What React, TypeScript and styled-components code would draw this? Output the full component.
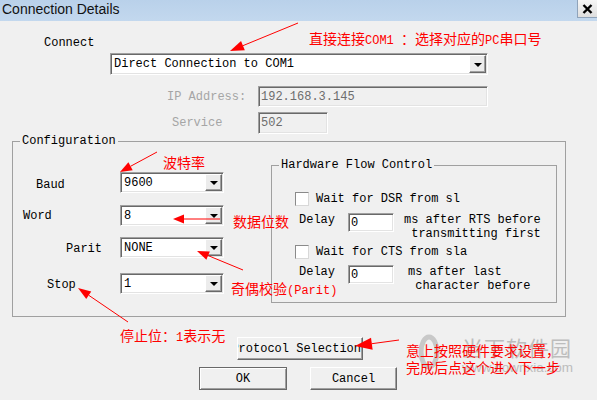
import React from "react";
import styled, { createGlobalStyle } from "styled-components";

const MONO = `"Liberation Mono", "DejaVu Sans Mono", monospace`;
const CJK = `"Noto Sans CJK SC", "Noto Sans", sans-serif`;

const GlobalStyle = createGlobalStyle`
  html, body { margin: 0; padding: 0; background: #f0f0f0; }
  #root { width: 597px; height: 400px; }
`;

const Window = styled.div`
  position: relative;
  width: 597px;
  height: 400px;
  overflow: hidden;
  background: #f0f0f0;
  font-family: ${MONO};
  font-size: 12px;
  color: #000;
`;

const TitleBar = styled.div`
  display: flex;
  align-items: flex-start;
  height: 21px;
  background: linear-gradient(#b9d1ea, #c3d8ee);
`;
const Title = styled.div`
  flex: 1;
  padding-left: 2px;
  font-family: "Liberation Sans", Arial, sans-serif;
  font-size: 14px;
  line-height: 19px;
  color: #111;
`;
const CloseButton = styled.div`
  width: 20px;
  height: 18px;
  box-sizing: border-box;
  display: flex;
  align-items: center;
  justify-content: center;
  background: linear-gradient(#f6f6f6, #dedede);
  border-left: 1px solid #8fa3ba;
  border-bottom: 1px solid #8fa3ba;
`;

const Body = styled.div`
  display: flex;
  flex-direction: column;
  align-items: flex-start;
`;
const ConnectLabel = styled.div`
  margin: 15px 0 3px 44px;
  line-height: 14px;
`;

// sunken white box with a drop button (combo)
const Combo = styled.div<{ $w: number; $h: number; $ml?: number }>`
  display: flex;
  width: ${p => p.$w}px;
  height: ${p => p.$h}px;
  margin-left: ${p => p.$ml || 0}px;
  box-sizing: border-box;
  background: #fff;
  border: 1px solid;
  border-color: #a0a0a0 #fff #fff #a0a0a0;
  box-shadow: inset 1px 1px 0 #696969, inset -1px -1px 0 #e3e3e3;
`;
const ComboText = styled.div`
  flex: 1;
  display: flex;
  align-items: center;
  padding-left: 3px;
  white-space: nowrap;
`;
const DropButton = styled.div`
  width: 17px;
  margin: 1px 1px 1px 0;
  box-sizing: border-box;
  display: flex;
  align-items: center;
  justify-content: center;
  background: #ececec;
  border: 1px solid;
  border-color: #fff #696969 #696969 #fff;
  box-shadow: inset -1px -1px 0 #a0a0a0;
  &::after {
    content: "";
    border-left: 4px solid transparent;
    border-right: 4px solid transparent;
    border-top: 4px solid #000;
    margin-top: 1px;
  }
`;

const FieldRow = styled.div<{ $mt: number }>`
  display: grid;
  grid-template-columns: 258px auto;
  align-items: center;
  margin-top: ${p => p.$mt}px;
`;
const DisabledLabel = styled.div<{ $indent: number }>`
  padding-left: ${p => p.$indent}px;
  color: #a5a5a5;
  line-height: 14px;
`;
const Field = styled.div<{ $w: number; $h: number; $disabled?: boolean }>`
  width: ${p => p.$w}px;
  height: ${p => p.$h}px;
  box-sizing: border-box;
  display: flex;
  align-items: center;
  padding-left: 2px;
  background: ${p => (p.$disabled ? "#f0f0f0" : "#fff")};
  color: ${p => (p.$disabled ? "#6d6d6d" : "#000")};
  border: 1px solid;
  border-color: #a0a0a0 #fff #fff #a0a0a0;
  box-shadow: inset 1px 1px 0 #696969, inset -1px -1px 0 #e3e3e3;
`;

const Group = styled.fieldset<{ $w: number; $h: number; $ml?: number; $mt?: number }>`
  width: ${p => p.$w}px;
  height: ${p => p.$h}px;
  margin: ${p => p.$mt || 0}px 0 0 ${p => p.$ml || 0}px;
  padding: 0;
  box-sizing: border-box;
  border: 1px solid #a0a0a0;
  min-width: 0;
`;
const Legend = styled.legend`
  margin-left: 7px;
  padding: 0 2px;
  line-height: 14px;
`;
const ConfigBody = styled.div`
  display: flex;
  align-items: flex-start;
`;
const SettingsColumn = styled.div`
  width: 258px;
  padding-top: 24px;
  display: flex;
  flex-direction: column;
`;
const SettingRow = styled.div<{ $mt: number }>`
  display: grid;
  grid-template-columns: 107px 104px;
  align-items: center;
  margin-top: ${p => p.$mt}px;
`;
const SettingLabel = styled.div<{ $indent: number; $dy?: number }>`
  padding-left: ${p => p.$indent}px;
  padding-top: ${p => p.$dy || 0}px;
  line-height: 14px;
`;

const CheckRow = styled.div<{ $mt: number }>`
  display: flex;
  align-items: center;
  gap: 7px;
  margin: ${p => p.$mt}px 0 0 23px;
  line-height: 14px;
`;
const CheckBox = styled.span`
  width: 14px;
  height: 14px;
  box-sizing: border-box;
  background: #fff;
  border: 1px solid;
  border-color: #8a8a8a #d8d8d8 #d8d8d8 #8a8a8a;
`;
const DelayRow = styled.div<{ $mt: number; $gap: number }>`
  display: grid;
  grid-template-columns: 76px 46px auto;
  align-items: start;
  margin-top: ${p => p.$mt}px;
  line-height: 14px;
  > :last-child {
    padding-left: ${p => p.$gap}px;
  }
`;
const DelayLabel = styled.div`
  padding-left: 27px;
`;
const DelayNote = styled.div`
  white-space: pre;
`;

const Button = styled.div<{ $w: number; $default?: boolean }>`
  width: ${p => p.$w}px;
  height: 23px;
  box-sizing: border-box;
  display: flex;
  align-items: center;
  justify-content: center;
  overflow: hidden;
  white-space: nowrap;
  background: #f0f0f0;
  border: 1px solid;
  border-color: ${p => (p.$default ? "#696969" : "#fff #696969 #696969 #fff")};
  box-shadow: ${p =>
    p.$default
      ? "inset 1px 1px 0 #fff, inset -1px -1px 0 #a0a0a0"
      : "inset -1px -1px 0 #a0a0a0"};
`;
const ProtocolButton = styled(Button)`
  justify-content: flex-end;
  padding-right: 1px;
  margin: 20px 0 0 237px;
`;
const ButtonRow = styled.div`
  display: flex;
  gap: 23px;
  margin: 7px 0 0 199px;
`;

// annotations drawn over the dialog
const Overlay = styled.div`
  position: absolute;
  inset: 0;
  pointer-events: none;
`;
const Note = styled.div<{ $x: number; $y: number; $lh?: number }>`
  position: absolute;
  left: ${p => p.$x}px;
  top: ${p => p.$y}px;
  font-family: ${CJK};
  font-size: 14px;
  line-height: ${p => p.$lh || 14}px;
  color: #ff0000;
  white-space: nowrap;
`;
const Latin = styled.span`
  font-family: ${MONO};
  font-size: 12px;
`;
const Watermark = styled.div`
  position: absolute;
  left: 418px;
  top: 333px;
  display: flex;
  gap: 22px;
  color: #bdbdbd;
`;
const WatermarkText = styled.div`
  display: flex;
  flex-direction: column;
  font-family: ${CJK};
  font-size: 21px;
  line-height: 28px;
  letter-spacing: 1px;
  > small {
    font-family: "Liberation Sans", Arial, sans-serif;
    font-size: 13.5px;
    line-height: 14px;
    letter-spacing: 0;
  }
`;

function Arrow({ from, to, head = 12, wing = 4.5 }: { from: [number, number]; to: [number, number]; head?: number; wing?: number }) {
  const [x1, y1] = from;
  const [x2, y2] = to;
  const len = Math.hypot(x2 - x1, y2 - y1);
  const ux = (x2 - x1) / len;
  const uy = (y2 - y1) / len;
  const bx = x2 - ux * head;
  const by = y2 - uy * head;
  const px = -uy * wing;
  const py = ux * wing;
  return (
    <g>
      <line x1={x1} y1={y1} x2={bx} y2={by} stroke="#ff0000" strokeWidth={1} />
      <polygon points={`${x2},${y2} ${bx + px},${by + py} ${bx - px},${by - py}`} fill="#ff0000" />
    </g>
  );
}

export default function App() {
  return (
    <Window>
      <GlobalStyle />
      <TitleBar>
        <Title>Connection Details</Title>
        <CloseButton>
          <svg width="11" height="10" viewBox="0 0 11 10">
            <path d="M1.5 1 L9.5 9 M9.5 1 L1.5 9" stroke="#000" strokeWidth="2.4" />
          </svg>
        </CloseButton>
      </TitleBar>
      <Body>
        <ConnectLabel>Connect</ConnectLabel>
        <Combo $w={378} $h={22} $ml={110}>
          <ComboText>Direct Connection to COM1</ComboText>
          <DropButton />
        </Combo>
        <FieldRow $mt={11}>
          <DisabledLabel $indent={167}>IP Address:</DisabledLabel>
          <Field $w={230} $h={21} $disabled>192.168.3.145</Field>
        </FieldRow>
        <FieldRow $mt={5}>
          <DisabledLabel $indent={172}>Service</DisabledLabel>
          <Field $w={70} $h={22} $disabled>502</Field>
        </FieldRow>

        <Group $w={554} $h={183} $ml={12}>
          <Legend>Configuration</Legend>
          <ConfigBody>
            <SettingsColumn>
              <SettingRow $mt={0}>
                <SettingLabel $indent={23} $dy={5}>Baud</SettingLabel>
                <Combo $w={104} $h={21}><ComboText>9600</ComboText><DropButton /></Combo>
              </SettingRow>
              <SettingRow $mt={12}>
                <SettingLabel $indent={10}>Word</SettingLabel>
                <Combo $w={104} $h={21}><ComboText>8</ComboText><DropButton /></Combo>
              </SettingRow>
              <SettingRow $mt={11}>
                <SettingLabel $indent={53} $dy={3}>Parit</SettingLabel>
                <Combo $w={104} $h={21}><ComboText>NONE</ComboText><DropButton /></Combo>
              </SettingRow>
              <SettingRow $mt={15}>
                <SettingLabel $indent={34} $dy={2}>Stop</SettingLabel>
                <Combo $w={104} $h={21}><ComboText>1</ComboText><DropButton /></Combo>
              </SettingRow>
            </SettingsColumn>

            <Group $w={286} $h={145} $mt={10}>
              <Legend>Hardware Flow Control</Legend>
              <CheckRow $mt={20}>
                <CheckBox />
                Wait for DSR from sl
              </CheckRow>
              <DelayRow $mt={7} $gap={10}>
                <DelayLabel>Delay</DelayLabel>
                <Field $w={46} $h={19}>0</Field>
                <DelayNote>{"ms after RTS before\n transmitting first"}</DelayNote>
              </DelayRow>
              <CheckRow $mt={4}>
                <CheckBox />
                Wait for CTS from sla
              </CheckRow>
              <DelayRow $mt={6} $gap={14}>
                <DelayLabel>Delay</DelayLabel>
                <Field $w={46} $h={19}>0</Field>
                <DelayNote>{"ms after last\n character before"}</DelayNote>
              </DelayRow>
            </Group>
          </ConfigBody>
        </Group>

        <ProtocolButton $w={126}>Protocol Selection</ProtocolButton>
        <ButtonRow>
          <Button $w={88} $default>OK</Button>
          <Button $w={87}>Cancel</Button>
        </ButtonRow>
      </Body>

      <Overlay>
        <Watermark>
          <svg width="22" height="38" viewBox="0 0 22 38">
            <ellipse cx="11" cy="19" rx="8" ry="15" fill="none" stroke="#c8c8c8" strokeWidth="5" />
          </svg>
          <WatermarkText>
            <span>当下软件园</span>
            <small>www.downxia.com</small>
          </WatermarkText>
        </Watermark>

        <svg width="597" height="400" style={{ position: "absolute", left: 0, top: 0 }}>
          <Arrow from={[298, 23]} to={[230, 51]} head={14} wing={5} />
          <Arrow from={[157, 152]} to={[120, 172]} />
          <Arrow from={[220, 219]} to={[173, 219]} head={11} />
          <Arrow from={[243, 270]} to={[197, 251]} />
          <Arrow from={[128, 322]} to={[78, 288]} head={13} />
          <Arrow from={[399, 340]} to={[355, 346]} head={17} wing={6} />
        </svg>

        <Note $x={309} $y={31}>直接连接<Latin>COM1 </Latin>：选择对应的<Latin>PC</Latin>串口号</Note>
        <Note $x={163} $y={155}>波特率</Note>
        <Note $x={233} $y={214}>数据位数</Note>
        <Note $x={231} $y={281}>奇偶校验<Latin>(Parit)</Latin></Note>
        <Note $x={120} $y={328}>停止位：<Latin>1</Latin>表示无</Note>
        <Note $x={406} $y={342} $lh={17}>
          意上按照硬件要求设置，<br />完成后点这个进入下一步
        </Note>
      </Overlay>
    </Window>
  );
}
